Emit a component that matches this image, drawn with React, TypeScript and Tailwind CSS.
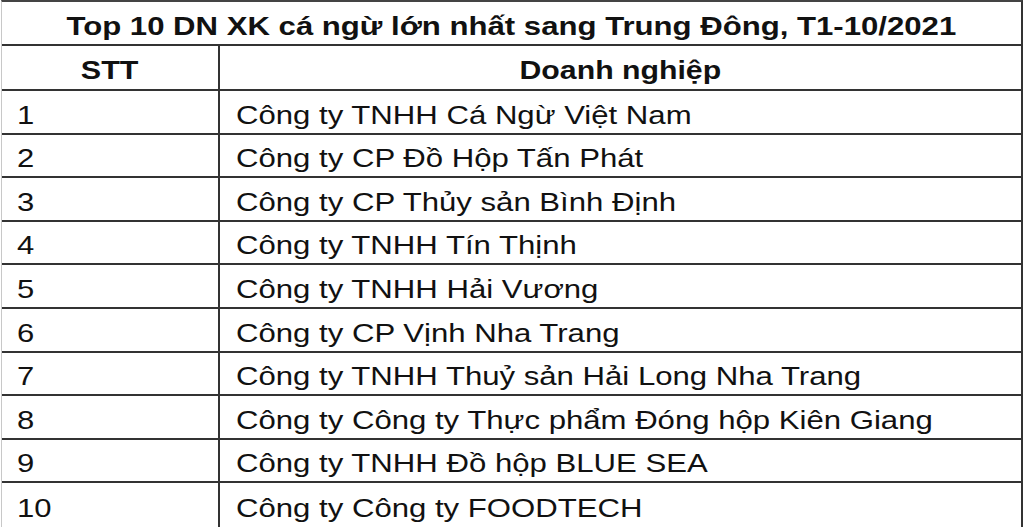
const rows = [
  "Công ty TNHH Cá Ngừ Việt Nam",
  "Công ty CP Đồ Hộp Tấn Phát",
  "Công ty CP Thủy sản Bình Định",
  "Công ty TNHH Tín Thịnh",
  "Công ty TNHH Hải Vương",
  "Công ty CP Vịnh Nha Trang",
  "Công ty TNHH Thuỷ sản Hải Long Nha Trang",
  "Công ty Công ty Thực phẩm Đóng hộp Kiên Giang",
  "Công ty TNHH Đồ hộp BLUE SEA",
  "Công ty Công ty FOODTECH",
];

export default function App() {
  return (
    <div className="w-[1024px] h-[527px] overflow-hidden bg-white text-[#111] font-['Liberation_Sans',Arial,sans-serif]">
      <div className="ml-[1px] w-[1022px] border-t-2 border-l border-r-2 border-t-[#444] border-l-[#c8c8c8] border-r-[#333]">
        {/* title */}
        <div className="h-[44px] pt-[8px] border-b-2 border-[#333] flex items-center justify-center text-[25px] font-bold">
          <span className="inline-block whitespace-nowrap scale-x-[1.245] origin-center">
            Top 10 DN XK cá ngừ lớn nhất sang Trung Đông, T1-10/2021
          </span>
        </div>

        {/* header */}
        <div className="h-[45px] border-b-2 border-[#333] flex text-[25px] font-bold">
          <div className="w-[218px] flex items-center justify-center pt-[6px] border-r-2 border-[#333]">
            <span className="inline-block scale-x-[1.22] origin-center">STT</span>
          </div>
          <div className="flex-1 flex items-center justify-center pt-[6px]">
            <span className="inline-block scale-x-[1.21] origin-center">Doanh nghiệp</span>
          </div>
        </div>

        {/* rows */}
        {rows.map((name, i) => (
          <div key={i} className="h-[43.6px] border-b-2 last:border-b-0 border-[#333] flex text-[25px]">
            <div className="w-[218px] flex items-center pt-[7px] pl-[15px] border-r-2 border-[#333]">
              <span className="inline-block scale-x-[1.24] origin-left">{i + 1}</span>
            </div>
            <div className="flex-1 flex items-center pt-[7px] pl-[16px]">
              <span className="inline-block whitespace-nowrap scale-x-[1.245] origin-left">{name}</span>
            </div>
          </div>
        ))}
      </div>
    </div>
  );
}
